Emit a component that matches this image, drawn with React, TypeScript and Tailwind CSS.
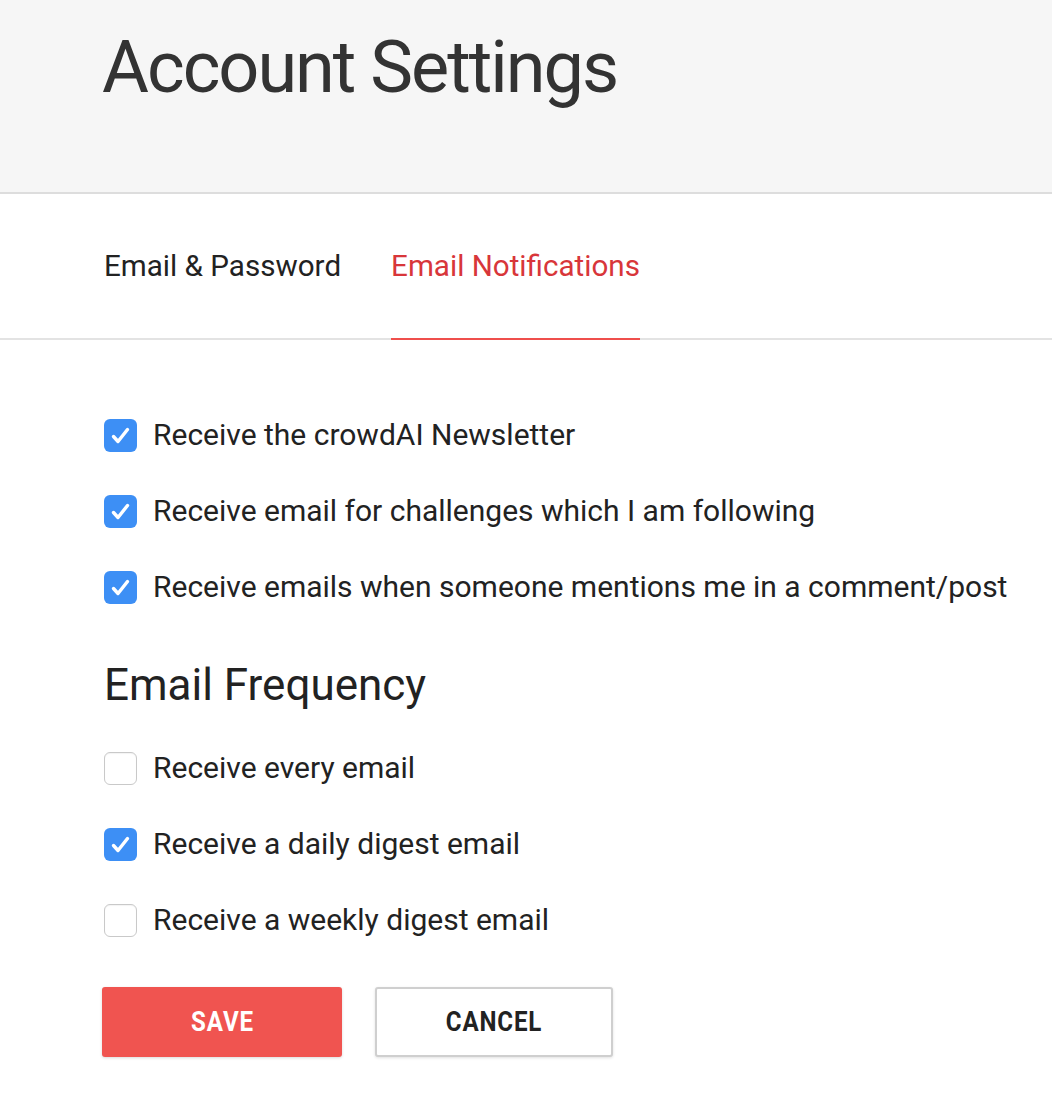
import React, { useState } from 'react';

const Check: React.FC<{ checked: boolean; onClick: () => void }> = ({ checked, onClick }) => (
  <button
    type="button"
    onClick={onClick}
    className={`flex h-[33px] w-[33px] shrink-0 items-center justify-center rounded-[6px] ${
      checked ? 'bg-[#3d8ff5]' : 'border-[1.5px] border-[#c9c9c9] bg-white shadow-[inset_0_1px_1px_rgba(0,0,0,0.05)]'
    }`}
  >
    {checked && (
      <svg viewBox="0 0 33 33" className="h-[33px] w-[33px]" fill="none">
        <path d="M9.5 17.5 L14 22.5 L23.5 10.5" stroke="white" strokeWidth="3.4" strokeLinecap="round" strokeLinejoin="round" />
      </svg>
    )}
  </button>
);

const Row: React.FC<{ label: string; checked: boolean; onToggle: () => void }> = ({ label, checked, onToggle }) => (
  <label className="flex h-[76px] items-center gap-[16px] cursor-pointer">
    <Check checked={checked} onClick={onToggle} />
    <span className="whitespace-nowrap text-[30px] leading-[34px] text-[#222]">{label}</span>
  </label>
);

export default function App() {
  const [prefs, setPrefs] = useState([true, true, true]);
  const [freq, setFreq] = useState([false, true, false]);

  const toggle = (arr: boolean[], set: (v: boolean[]) => void, i: number) =>
    set(arr.map((v, j) => (j === i ? !v : v)));

  return (
    <div className="min-h-screen overflow-hidden bg-white" style={{ fontFamily: 'Roboto, "Open Sans", sans-serif' }}>
      <header className="h-[194px] border-b-2 border-[#dddddd] bg-[#f6f6f6] pl-[102px] pt-[32px]">
        <h1 className="text-[72px] leading-[72px] font-normal tracking-[-2px] text-[#333333]">Account Settings</h1>
      </header>

      <nav className="flex gap-[50px] border-b-2 border-[#e3e3e3] pl-[104px]">
        <div className="pt-[57px] pb-[57px] text-[29.6px] leading-[30px] text-[#222]">Email &amp; Password</div>
        <div className="-mb-[2px] border-b-2 border-[#ef4f4c] pt-[57px] pb-[57px] text-[29.6px] leading-[30px] text-[#d8363a]">
          Email Notifications
        </div>
      </nav>

      <main className="pl-[104px] pt-[57px] pb-[60px]">
        <Row label="Receive the crowdAI Newsletter" checked={prefs[0]} onToggle={() => toggle(prefs, setPrefs, 0)} />
        <Row label="Receive email for challenges which I am following" checked={prefs[1]} onToggle={() => toggle(prefs, setPrefs, 1)} />
        <Row label="Receive emails when someone mentions me in a comment/post" checked={prefs[2]} onToggle={() => toggle(prefs, setPrefs, 2)} />

        <h2 className="mt-[36px] mb-[21px] text-[44px] leading-[48px] font-normal text-[#222]">Email Frequency</h2>

        <Row label="Receive every email" checked={freq[0]} onToggle={() => toggle(freq, setFreq, 0)} />
        <Row label="Receive a daily digest email" checked={freq[1]} onToggle={() => toggle(freq, setFreq, 1)} />
        <Row label="Receive a weekly digest email" checked={freq[2]} onToggle={() => toggle(freq, setFreq, 2)} />

        <div className="mt-[29px] -ml-[2px] flex gap-[33px]">
          <button
            type="button"
            className="flex h-[70px] w-[240px] items-center justify-center rounded-[3px] bg-[#f05450] text-[28px] font-bold tracking-[1px] text-white shadow-[0_1px_3px_rgba(0,0,0,0.15)]"
          >
            <span className="inline-block scale-x-[0.86]">SAVE</span>
          </button>
          <button
            type="button"
            className="flex h-[70px] w-[238px] items-center justify-center rounded-[3px] border-2 border-[#cfcfcf] bg-white text-[28px] font-bold tracking-[1px] text-[#222] shadow-[0_1px_3px_rgba(0,0,0,0.12)]"
          >
            <span className="inline-block scale-x-[0.86]">CANCEL</span>
          </button>
        </div>
      </main>
    </div>
  );
}
